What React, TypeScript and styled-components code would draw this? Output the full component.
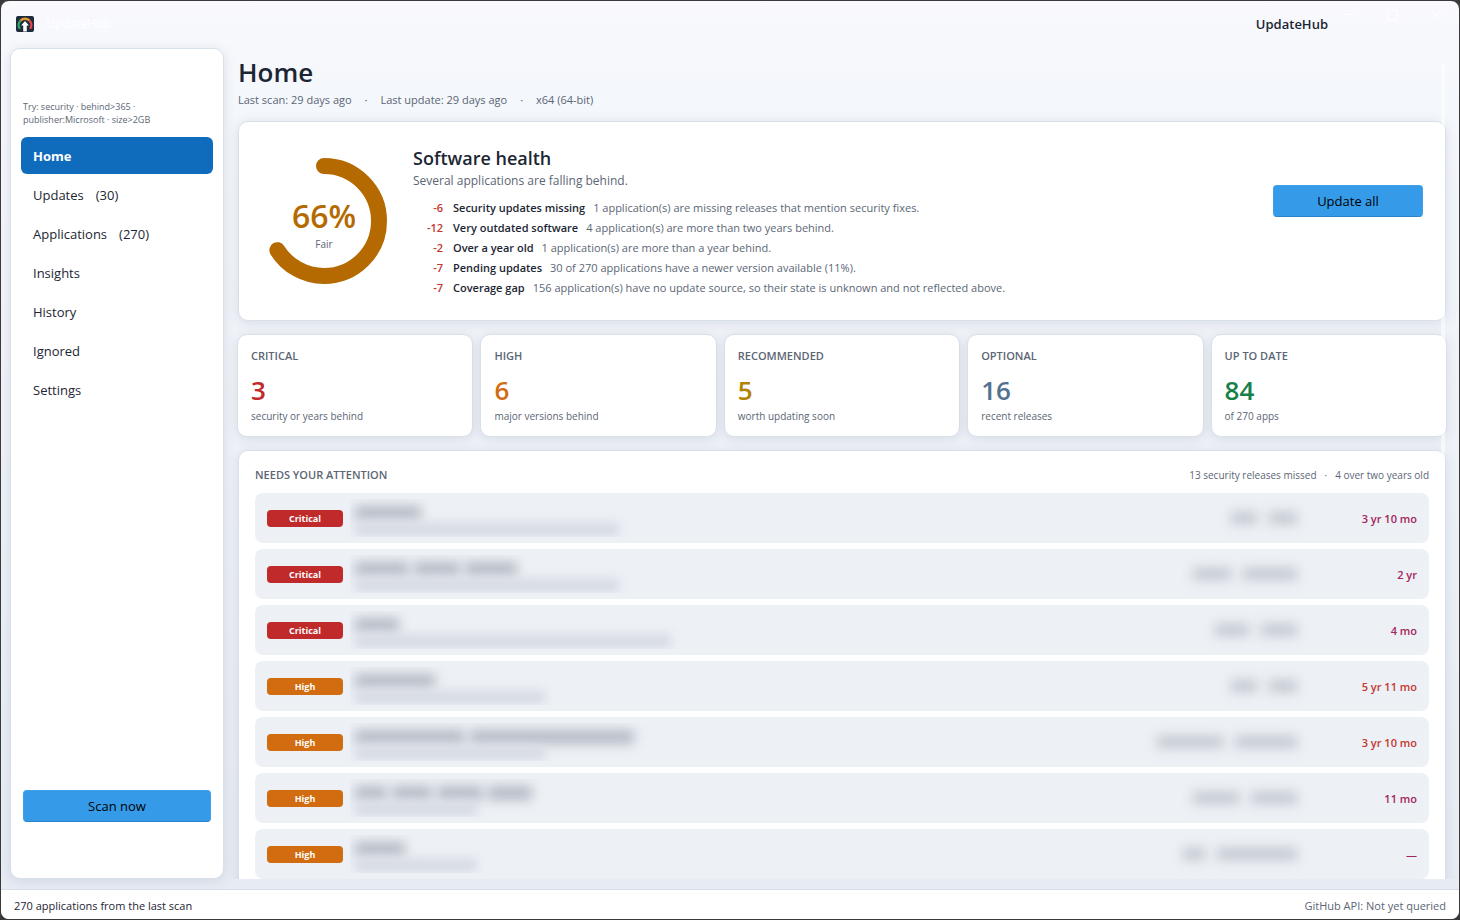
import React from "react";
import styled, { createGlobalStyle } from "styled-components";

const Global = createGlobalStyle`
  * { box-sizing: border-box; }
  html, body { margin: 0; padding: 0; background: #3a3a3a; }
  body { font-family: "Open Sans", "Noto Sans", sans-serif; color: #1c2633; font-size: 13px; }
  h1, h2, h3, p, ul { margin: 0; padding: 0; }
  ul { list-style: none; }
`;

const Window = styled.div`
  position: relative;
  display: flex;
  flex-direction: column;
  height: 100vh;
  min-height: 480px;
  border: 1px solid #3a3a3a;
  border-radius: 9px;
  overflow: hidden;
  background: linear-gradient(180deg, #f9f9fe 0%, #f4f7fb 10%, #eff2f8 45%, #e7ebf3 100%);
`;

const TitleBar = styled.header`
  display: flex;
  align-items: center;
  flex: none;
  height: 47px;
  padding: 0 15px 2px;
`;

const AppName = styled.span`
  margin-left: 12px;
  flex: 1;
  font-size: 12px;
  color: #ffffff;
`;

const WindowTitle = styled.span`
  font-size: 13px;
  font-weight: 600;
  margin-right: 12px;
`;

const Controls = styled.div`
  display: flex;
  align-self: flex-start;
  gap: 28px;
  padding-top: 6px;
`;

const ControlButton = styled.button`
  display: grid;
  place-items: center;
  width: 16px;
  height: 16px;
  padding: 0;
  border: 0;
  background: none;
  color: #ffffff;
`;

const Body = styled.div`
  display: flex;
  flex: 1;
  min-height: 0;
  gap: 14px;
  padding: 0 13px 10px 9px;
`;

const Sidebar = styled.aside`
  display: flex;
  flex-direction: column;
  flex: none;
  width: 214px;
  padding: 51px 10px 56px;
  background: #ffffff;
  border: 1px solid #d8e0ea;
  border-radius: 10px;
  box-shadow: 0 2px 12px rgba(85, 100, 130, 0.16);
`;

const Hint = styled.p`
  padding: 0 2px;
  font-size: 9px;
  line-height: 13px;
  color: #5b6675;
`;

const Nav = styled.nav`
  display: flex;
  flex-direction: column;
  flex: 1;
  gap: 2px;
  margin-top: 11px;
`;

const NavLink = styled.a<{ $active?: boolean }>`
  display: flex;
  align-items: center;
  gap: 12px;
  height: 37px;
  padding: 0 12px;
  border-radius: 6px;
  font-size: 13px;
  text-decoration: none;
  font-weight: ${(p) => (p.$active ? 700 : 400)};
  color: ${(p) => (p.$active ? "#ffffff" : "#1c2633")};
  background: ${(p) => (p.$active ? "#0f6cbd" : "transparent")};
`;

const AccentButton = styled.button<{ $width?: number }>`
  height: 32px;
  width: ${(p) => (p.$width ? `${p.$width}px` : "auto")};
  margin: ${(p) => (p.$width ? "0" : "0 2px")};
  border: 1px solid #3f9fe8;
  border-bottom-color: #2b83c9;
  border-radius: 4px;
  background: #359be9;
  color: #000000;
  font-family: inherit;
  font-size: 13px;
`;

const Main = styled.main`
  flex: 1;
  min-width: 0;
  margin: 0 -12px;
  padding: 0 12px;
  overflow: hidden;
`;

const PageTitle = styled.h1`
  padding-top: 6px;
  font-size: 26px;
  line-height: 36px;
  font-weight: 600;
`;

const Meta = styled.p`
  display: flex;
  gap: 13px;
  padding-top: 1px;
  margin-bottom: 12px;
  font-size: 11px;
  line-height: 18px;
  color: #5b6675;
`;

const Card = styled.section`
  background: #ffffff;
  border: 1px solid #d8e0ea;
  border-radius: 10px;
  box-shadow: 0 2px 12px rgba(85, 100, 130, 0.16);
`;

const Hero = styled(Card)`
  display: flex;
  align-items: center;
  gap: 26px;
  min-height: 200px;
  padding: 16px 22px;
`;

const Ring = styled.div`
  display: grid;
  flex: none;
  place-items: center;
  width: 126px;
  height: 126px;
  > * { grid-area: 1 / 1; }
`;

const Score = styled.div`
  display: flex;
  flex-direction: column;
  align-items: center;
  padding-top: 8px;
  color: #b46a00;
  font-size: 32px;
  line-height: 38px;
  font-weight: 600;
`;

const ScoreLabel = styled.span`
  font-size: 10px;
  line-height: 18px;
  font-weight: 400;
  color: #5b6675;
`;

const HealthText = styled.div`
  flex: 1;
  min-width: 0;
`;

const HealthTitle = styled.h2`
  font-size: 18px;
  line-height: 26px;
  font-weight: 600;
`;

const HealthSub = styled.p`
  padding-top: 1px;
  margin-bottom: 8px;
  font-size: 12px;
  line-height: 18px;
  color: #5b6675;
`;

const Factor = styled.li`
  display: flex;
  line-height: 20px;
  font-size: 11px;
  color: #5b6675;
`;

const Points = styled.span`
  width: 30px;
  margin-right: 10px;
  text-align: right;
  font-weight: 600;
  color: #c4362f;
`;

const FactorName = styled.strong`
  margin-right: 8px;
  font-weight: 600;
  color: #1c2633;
`;

const HeroAction = styled.div`
  padding-bottom: 40px;
`;

const Stats = styled.div`
  display: grid;
  grid-template-columns: repeat(5, 1fr);
  gap: 7px;
  margin: 13px -1px;
`;

const Stat = styled(Card)`
  padding: 12px 13px;
`;

const Caps = styled.h3`
  font-size: 11px;
  line-height: 18px;
  font-weight: 600;
  color: #5b6675;
`;

const StatValue = styled.p<{ $color: string }>`
  padding: 8px 0 1px;
  font-size: 26px;
  line-height: 34px;
  font-weight: 600;
  color: ${(p) => p.$color};
`;

const StatCaption = styled.p`
  font-size: 10px;
  line-height: 16px;
  color: #5b6675;
`;

const Attention = styled(Card)`
  padding: 15px 16px;
`;

const AttentionHead = styled.div`
  display: flex;
  justify-content: space-between;
  margin-bottom: 9px;
`;

const Summary = styled.p`
  display: flex;
  gap: 8px;
  font-size: 10px;
  line-height: 18px;
  color: #5b6675;
`;

const Rows = styled.ul`
  display: flex;
  flex-direction: column;
  gap: 6px;
`;

const Row = styled.li`
  display: flex;
  align-items: center;
  height: 50px;
  padding: 0 12px;
  border-radius: 8px;
  background: #edf1f6;
`;

const Badge = styled.span<{ $critical: boolean }>`
  flex: none;
  width: 76px;
  padding-top: 1px;
  border-radius: 4px;
  text-align: center;
  font-size: 9px;
  line-height: 16px;
  font-weight: 700;
  color: #ffffff;
  background: ${(p) => (p.$critical ? "#c02a2a" : "#d16c10")};
`;

const Redacted = styled.div`
  display: flex;
  flex: 1;
  flex-direction: column;
  gap: 2px;
  height: 38px;
  margin-left: 7px;
  padding: 7px 5px 0;
  overflow: hidden;
`;

const Words = styled.span<{ $gap: number }>`
  display: flex;
  gap: ${(p) => p.$gap}px;
`;

const Word = styled.i<{ $w: number; $tone: "strong" | "soft" | "mid" }>`
  width: ${(p) => p.$w}px;
  height: ${(p) => (p.$tone === "mid" ? 12 : 14)}px;
  filter: blur(${(p) => (p.$tone === "soft" ? 5 : 6)}px);
  background: ${(p) =>
    p.$tone === "strong" ? "#b4bac4" : p.$tone === "mid" ? "#c2c7cf" : "#d7dbe3"};
`;

const Age = styled.span<{ $color: string }>`
  width: 120px;
  text-align: right;
  font-size: 11px;
  font-weight: 600;
  color: ${(p) => p.$color};
`;

const ScrollThumb = styled.div`
  position: absolute;
  top: 62px;
  right: 14px;
  bottom: 41px;
  width: 4px;
  border-radius: 2px;
  background: rgba(255, 255, 255, 0.55);
  pointer-events: none;
`;

const StatusBar = styled.footer`
  display: flex;
  align-items: center;
  justify-content: space-between;
  flex: none;
  height: 30px;
  padding: 2px 13px 0;
  border-top: 1px solid #d8dde8;
  background: #ffffff;
  font-size: 11px;
`;

const ApiState = styled.span`
  color: #5b6675;
`;

const nav: { label: string; count?: number }[] = [
  { label: "Home" },
  { label: "Updates", count: 30 },
  { label: "Applications", count: 270 },
  { label: "Insights" },
  { label: "History" },
  { label: "Ignored" },
  { label: "Settings" },
];

const factors: [string, string, string][] = [
  ["-6", "Security updates missing", "1 application(s) are missing releases that mention security fixes."],
  ["-12", "Very outdated software", "4 application(s) are more than two years behind."],
  ["-2", "Over a year old", "1 application(s) are more than a year behind."],
  ["-7", "Pending updates", "30 of 270 applications have a newer version available (11%)."],
  ["-7", "Coverage gap", "156 application(s) have no update source, so their state is unknown and not reflected above."],
];

const stats: [string, string, string, string][] = [
  ["CRITICAL", "3", "security or years behind", "#c02a2a"],
  ["HIGH", "6", "major versions behind", "#d16c10"],
  ["RECOMMENDED", "5", "worth updating soon", "#b08400"],
  ["OPTIONAL", "16", "recent releases", "#54708f"],
  ["UP TO DATE", "84", "of 270 apps", "#188048"],
];

const PLUM = "#a3245a";
const RED = "#c4362f";

const rows: {
  critical: boolean;
  title: number[];
  detail: number[];
  version: number[];
  age: string;
  color: string;
}[] = [
  { critical: true, title: [66], detail: [264], version: [26, 28], age: "3 yr 10 mo", color: PLUM },
  { critical: true, title: [54, 46, 52], detail: [264], version: [38, 54], age: "2 yr", color: PLUM },
  { critical: true, title: [44], detail: [316], version: [34, 36], age: "4 mo", color: PLUM },
  { critical: false, title: [80], detail: [190], version: [26, 28], age: "5 yr 11 mo", color: RED },
  { critical: false, title: [110, 164], detail: [190], version: [66, 62], age: "3 yr 10 mo", color: RED },
  { critical: false, title: [32, 40, 46, 44], detail: [122], version: [46, 46], age: "11 mo", color: PLUM },
  { critical: false, title: [50], detail: [122], version: [22, 80], age: "—", color: PLUM },
];

function Logo() {
  return (
    <svg width="18" height="16" viewBox="0 0 18 16" aria-hidden="true">
      <rect width="18" height="16" rx="2" fill="#1f2a3d" />
      <g fill="none" strokeWidth="2.4">
        <path d="M3.9 12.8A6.2 6.2 0 0 1 4.6 4.6" stroke="#2fa866" />
        <path d="M4.6 4.6A6.2 6.2 0 0 1 13.4 4.6" stroke="#e09a2c" />
        <path d="M13.4 4.6A6.2 6.2 0 0 1 14.1 12.8" stroke="#e0484a" />
      </g>
      <path d="M9 5L13 9.4H10.8V15.4H7.2V9.4H5Z" fill="#ffffff" />
    </svg>
  );
}

function Gauge({ value }: { value: number }) {
  const length = 2 * Math.PI * 55;
  return (
    <svg width="126" height="126" viewBox="0 0 126 126" aria-hidden="true">
      <circle
        cx="63"
        cy="63"
        r="55"
        fill="none"
        stroke="#b46a00"
        strokeWidth="16"
        strokeLinecap="round"
        strokeDasharray={`${(length * value) / 100} ${length}`}
        transform="rotate(-90 63 63)"
      />
    </svg>
  );
}

export default function App() {
  return (
    <>
      <Global />
      <Window>
        <TitleBar>
          <Logo />
          <AppName>UpdateHub</AppName>
          <WindowTitle>UpdateHub</WindowTitle>
          <Controls>
            <ControlButton aria-label="Minimize">
              <svg width="12" height="12" fill="none" stroke="currentColor"><path d="M1 5.5H12" /></svg>
            </ControlButton>
            <ControlButton aria-label="Maximize">
              <svg width="12" height="12" fill="none" stroke="currentColor"><rect x="1.5" y="1.5" width="10" height="10" rx="1.5" /></svg>
            </ControlButton>
            <ControlButton aria-label="Close">
              <svg width="12" height="12" fill="none" stroke="currentColor"><path d="M1 1L11 11M11 1L1 11" /></svg>
            </ControlButton>
          </Controls>
        </TitleBar>
        <Body>
          <Sidebar>
            <Hint>
              Try: security · behind&gt;365 ·<br />
              publisher:Microsoft · size&gt;2GB
            </Hint>
            <Nav>
              {nav.map((item, i) => (
                <NavLink key={item.label} href="#" $active={i === 0}>
                  <span>{item.label}</span>
                  {item.count !== undefined && <span>({item.count})</span>}
                </NavLink>
              ))}
            </Nav>
            <AccentButton>Scan now</AccentButton>
          </Sidebar>
          <Main>
            <PageTitle>Home</PageTitle>
            <Meta>
              <span>Last scan: 29 days ago</span>
              <span>·</span>
              <span>Last update: 29 days ago</span>
              <span>·</span>
              <span>x64 (64-bit)</span>
            </Meta>
            <Hero>
              <Ring>
                <Gauge value={66} />
                <Score>
                  66%
                  <ScoreLabel>Fair</ScoreLabel>
                </Score>
              </Ring>
              <HealthText>
                <HealthTitle>Software health</HealthTitle>
                <HealthSub>Several applications are falling behind.</HealthSub>
                <ul>
                  {factors.map(([points, name, detail]) => (
                    <Factor key={name}>
                      <Points>{points}</Points>
                      <FactorName>{name}</FactorName>
                      <span>{detail}</span>
                    </Factor>
                  ))}
                </ul>
              </HealthText>
              <HeroAction>
                <AccentButton $width={150}>Update all</AccentButton>
              </HeroAction>
            </Hero>
            <Stats>
              {stats.map(([label, value, caption, color]) => (
                <Stat key={label}>
                  <Caps>{label}</Caps>
                  <StatValue $color={color}>{value}</StatValue>
                  <StatCaption>{caption}</StatCaption>
                </Stat>
              ))}
            </Stats>
            <Attention>
              <AttentionHead>
                <Caps>NEEDS YOUR ATTENTION</Caps>
                <Summary>
                  <span>13 security releases missed</span>
                  <span>·</span>
                  <span>4 over two years old</span>
                </Summary>
              </AttentionHead>
              <Rows>
                {rows.map((row, i) => (
                  <Row key={i}>
                    <Badge $critical={row.critical}>{row.critical ? "Critical" : "High"}</Badge>
                    <Redacted aria-hidden="true">
                      <Words $gap={5}>
                        {row.title.map((w, j) => <Word key={j} $w={w} $tone="strong" />)}
                      </Words>
                      <Words $gap={5}>
                        {row.detail.map((w, j) => <Word key={j} $w={w} $tone="soft" />)}
                      </Words>
                    </Redacted>
                    <Words $gap={12} aria-hidden="true">
                      {row.version.map((w, j) => <Word key={j} $w={w} $tone="mid" />)}
                    </Words>
                    <Age $color={row.color}>{row.age}</Age>
                  </Row>
                ))}
              </Rows>
            </Attention>
          </Main>
        </Body>
        <ScrollThumb />
        <StatusBar>
          <span>270 applications from the last scan</span>
          <ApiState>GitHub API: Not yet queried</ApiState>
        </StatusBar>
      </Window>
    </>
  );
}
